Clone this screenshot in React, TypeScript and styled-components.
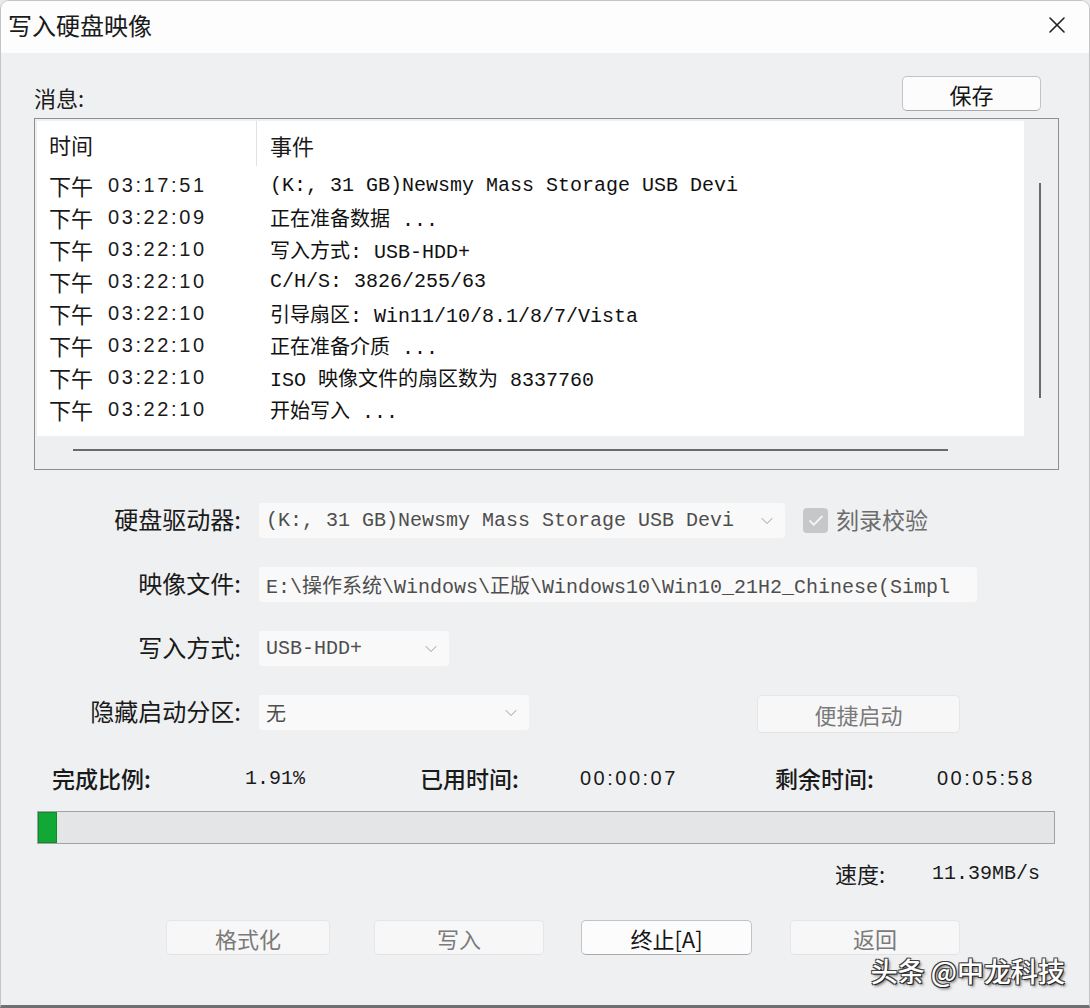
import React from "react";
import styled, { createGlobalStyle } from "styled-components";
import { ChevronDown, Check, X } from "lucide-react";

const GlobalStyle = createGlobalStyle`
  html, body {
    margin: 0;
    padding: 0;
    background: #e9eaec;
  }
  * {
    box-sizing: border-box;
  }
`;

const CJK = `"Noto Sans CJK SC", "Noto Sans", sans-serif`;
const MONO = `"Liberation Mono", "Noto Sans CJK SC", monospace`;
const DIGITS = `"Liberation Sans", "Noto Sans CJK SC", sans-serif`;

const Window = styled.div`
  position: relative;
  width: 1090px;
  height: 1008px;
  display: flex;
  flex-direction: column;
  background: #eff0f2;
  border: 1px solid #c4c4c6;
  border-bottom: 3px solid #707070;
  border-radius: 9px 9px 0 0;
  overflow: hidden;
  font-family: ${CJK};
  color: #1a1a1a;
`;

const TitleBar = styled.div`
  height: 52px;
  flex: none;
  display: flex;
  align-items: center;
  justify-content: space-between;
  padding: 0 18px 0 7px;
  background: #fdfdfd;
`;

const Title = styled.div`
  font-size: 24px;
  line-height: 1;
  margin-top: -4px;
  color: #1a1a1a;
`;

const CloseButton = styled.div`
  display: flex;
  align-items: center;
  margin-top: -4px;
  color: #222;
`;

const Body = styled.div`
  flex: 1;
  display: flex;
  flex-direction: column;
  padding: 0 30px 0 33px;
`;

const MessageHeader = styled.div`
  margin-top: 23px;
  height: 35px;
  display: flex;
  align-items: flex-end;
  justify-content: space-between;
`;

const SectionLabel = styled.div`
  font-size: 22px;
  line-height: 28px;
  color: #1a1a1a;
`;

const Button = styled.div<{ $disabled?: boolean; $width: number; $height?: number }>`
  width: ${(p) => p.$width}px;
  height: ${(p) => p.$height ?? 35}px;
  display: flex;
  align-items: center;
  justify-content: center;
  border-radius: 5px;
  font-size: 22px;
  background: ${(p) => (p.$disabled ? "#f7f7f8" : "#fcfcfc")};
  border: 1px solid ${(p) => (p.$disabled ? "#e6e6e8" : "#c3c3c5")};
  border-bottom-color: ${(p) => (p.$disabled ? "#e2e2e4" : "#a8a8aa")};
  color: ${(p) => (p.$disabled ? "#7a7a7a" : "#151515")};
  font-family: ${CJK};
`;

const SaveButton = styled(Button)`
  margin-right: 18px;
  align-self: flex-start;
`;

const LogBox = styled.div`
  margin-top: 7px;
  height: 352px;
  border: 1px solid #8e8e90;
  padding: 2px;
  background: #eeeff1;
  display: grid;
  grid-template-columns: 1fr 32px;
  grid-template-rows: 1fr 31px;
`;

const LogList = styled.div`
  background: #ffffff;
  display: flex;
  flex-direction: column;
  overflow: hidden;
`;

const LogHeader = styled.div`
  height: 48px;
  flex: none;
  display: flex;
  align-items: center;
  font-size: 22px;
`;

const HeaderTime = styled.div`
  width: 220px;
  height: 45px;
  align-self: flex-start;
  display: flex;
  align-items: center;
  padding-left: 12px;
  border-right: 1px solid #e2e2e2;
`;

const HeaderEvent = styled.div`
  padding-left: 13px;
`;

const LogRow = styled.div`
  height: 32px;
  flex: none;
  display: flex;
  align-items: center;
`;

const TimeCell = styled.div`
  width: 221px;
  padding-left: 12px;
  display: flex;
  align-items: center;
`;

const Period = styled.span`
  font-size: 22px;
  line-height: 1;
`;

const Clock = styled.span`
  font-family: ${DIGITS};
  font-size: 20px;
  letter-spacing: 2.6px;
  margin-left: 15px;
  color: #1a1a1a;
`;

const EventCell = styled.div`
  padding-left: 12px;
  font-family: ${MONO};
  font-size: 20px;
  white-space: pre;
  color: #111;
`;

const VScroll = styled.div`
  display: flex;
  justify-content: center;
  padding-top: 62px;
`;

const VThumb = styled.div`
  width: 2px;
  height: 215px;
  background: #6a6a6a;
`;

const HScroll = styled.div`
  padding: 13px 0 0 36px;
`;

const HThumb = styled.div`
  width: 875px;
  height: 2px;
  background: #6a6a6a;
`;

const Form = styled.div`
  margin-top: 33px;
  display: grid;
  grid-template-columns: 207px 1fr;
  column-gap: 18px;
  row-gap: 29px;
  align-items: start;
`;

const FieldLabel = styled.div`
  height: 35px;
  display: flex;
  align-items: center;
  justify-content: flex-end;
  padding-bottom: 5px;
  font-size: 24px;
  color: #1a1a1a;
  white-space: nowrap;
`;

const FieldRow = styled.div`
  height: 35px;
  display: flex;
  align-items: center;
`;

const Field = styled.div<{ $width: number }>`
  width: ${(p) => p.$width}px;
  height: 35px;
  flex: none;
  display: flex;
  align-items: center;
  justify-content: space-between;
  padding: 0 8px 0 7px;
  background: #f9f9fa;
  border-radius: 3px;
  font-family: ${MONO};
  font-size: 20px;
  color: #4e4e4e;
  white-space: pre;
  overflow: hidden;
`;

const FieldText = styled.span`
  overflow: hidden;
`;

const CheckBox = styled.div`
  width: 25px;
  height: 25px;
  margin-left: 18px;
  border-radius: 4px;
  background: #c6c7c9;
  display: flex;
  align-items: center;
  justify-content: center;
  color: #f4f4f4;
`;

const CheckLabel = styled.span`
  margin-left: 8px;
  margin-bottom: 3px;
  font-size: 23px;
  line-height: 28px;
  color: #6c6c6c;
`;

const QuickBoot = styled(Button)`
  margin-left: 228px;
  align-self: flex-start;
`;

const Stats = styled.div`
  margin-top: 31px;
  height: 30px;
  padding-left: 18px;
  display: grid;
  grid-template-columns: 193px 175px 160px 195px 162px auto;
  align-items: center;
`;

const StatLabel = styled.div`
  font-size: 23px;
  font-weight: 500;
  color: #1a1a1a;
`;

const StatMono = styled.div`
  font-family: ${MONO};
  font-size: 20px;
  color: #1a1a1a;
`;

const StatClock = styled.div`
  font-family: ${DIGITS};
  font-size: 20px;
  letter-spacing: 2.5px;
  color: #1a1a1a;
`;

const Progress = styled.div`
  margin: 20px 4px 0 3px;
  height: 33px;
  border: 1px solid #a2a2a4;
  background: #e4e5e7;
  display: flex;
`;

const ProgressFill = styled.div`
  background: #12a836;
  border: 1px solid #0e8a2b;
  height: 100%;
`;

const SpeedRow = styled.div`
  margin-top: 15px;
  height: 28px;
  padding-left: 801px;
  display: grid;
  grid-template-columns: 97px auto;
  align-items: center;
`;

const ButtonRow = styled.div`
  margin-top: 33px;
  padding-left: 132px;
  display: grid;
  grid-template-columns: 208px 207px 209px 170px;
  justify-items: start;
`;

const Watermark = styled.div`
  position: absolute;
  right: 24px;
  bottom: 15px;
  font-size: 27px;
  font-weight: 500;
  font-family: ${CJK};
  color: #ffffff;
  text-shadow: 1px 1px 0 #222, -1px -1px 0 #444, 1px -1px 0 #444, -1px 1px 0 #444,
    2px 2px 3px rgba(0, 0, 0, 0.6);
`;

const logRows = [
  { time: "03:17:51", event: "(K:, 31 GB)Newsmy Mass Storage USB Devi" },
  { time: "03:22:09", event: "正在准备数据 ..." },
  { time: "03:22:10", event: "写入方式: USB-HDD+" },
  { time: "03:22:10", event: "C/H/S: 3826/255/63" },
  { time: "03:22:10", event: "引导扇区: Win11/10/8.1/8/7/Vista" },
  { time: "03:22:10", event: "正在准备介质 ..." },
  { time: "03:22:10", event: "ISO 映像文件的扇区数为 8337760" },
  { time: "03:22:10", event: "开始写入 ..." },
];

const Chevron = () => <ChevronDown size={20} strokeWidth={1.2} color="#9a9a9a" />;

const App = () => {
  const progress = 1.91;
  return (
    <>
      <GlobalStyle />
      <Window>
        <TitleBar>
          <Title>写入硬盘映像</Title>
          <CloseButton>
            <X size={28} strokeWidth={1.4} />
          </CloseButton>
        </TitleBar>
        <Body>
          <MessageHeader>
            <SectionLabel>消息:</SectionLabel>
            <SaveButton $width={139}>保存</SaveButton>
          </MessageHeader>

          <LogBox>
            <LogList>
              <LogHeader>
                <HeaderTime>时间</HeaderTime>
                <HeaderEvent>事件</HeaderEvent>
              </LogHeader>
              {logRows.map((row, i) => (
                <LogRow key={i}>
                  <TimeCell>
                    <Period>下午</Period>
                    <Clock>{row.time}</Clock>
                  </TimeCell>
                  <EventCell>{row.event}</EventCell>
                </LogRow>
              ))}
            </LogList>
            <VScroll>
              <VThumb />
            </VScroll>
            <HScroll>
              <HThumb />
            </HScroll>
            <div />
          </LogBox>

          <Form>
            <FieldLabel>硬盘驱动器:</FieldLabel>
            <FieldRow>
              <Field $width={526}>
                <FieldText>(K:, 31 GB)Newsmy Mass Storage USB Devi</FieldText>
                <Chevron />
              </Field>
              <CheckBox>
                <Check size={18} strokeWidth={2.4} />
              </CheckBox>
              <CheckLabel>刻录校验</CheckLabel>
            </FieldRow>

            <FieldLabel>映像文件:</FieldLabel>
            <FieldRow>
              <Field $width={718}>
                <FieldText>E:\操作系统\Windows\正版\Windows10\Win10_21H2_Chinese(Simpl</FieldText>
              </Field>
            </FieldRow>

            <FieldLabel>写入方式:</FieldLabel>
            <FieldRow>
              <Field $width={190}>
                <FieldText>USB-HDD+</FieldText>
                <Chevron />
              </Field>
            </FieldRow>

            <FieldLabel>隐藏启动分区:</FieldLabel>
            <FieldRow>
              <Field $width={270}>
                <FieldText>无</FieldText>
                <Chevron />
              </Field>
              <QuickBoot $disabled $width={203} $height={38}>
                便捷启动
              </QuickBoot>
            </FieldRow>
          </Form>

          <Stats>
            <StatLabel>完成比例:</StatLabel>
            <StatMono>{progress.toFixed(2)}%</StatMono>
            <StatLabel>已用时间:</StatLabel>
            <StatClock>00:00:07</StatClock>
            <StatLabel>剩余时间:</StatLabel>
            <StatClock>00:05:58</StatClock>
          </Stats>

          <Progress>
            <ProgressFill style={{ width: `${progress}%` }} />
          </Progress>

          <SpeedRow>
            <SectionLabel>速度:</SectionLabel>
            <StatMono>11.39MB/s</StatMono>
          </SpeedRow>

          <ButtonRow>
            <Button $disabled $width={164}>格式化</Button>
            <Button $disabled $width={170}>写入</Button>
            <Button $width={171}>终止[A]</Button>
            <Button $disabled $width={170}>返回</Button>
          </ButtonRow>
        </Body>
        <Watermark>头条 @中龙科技</Watermark>
      </Window>
    </>
  );
};

export default App;
